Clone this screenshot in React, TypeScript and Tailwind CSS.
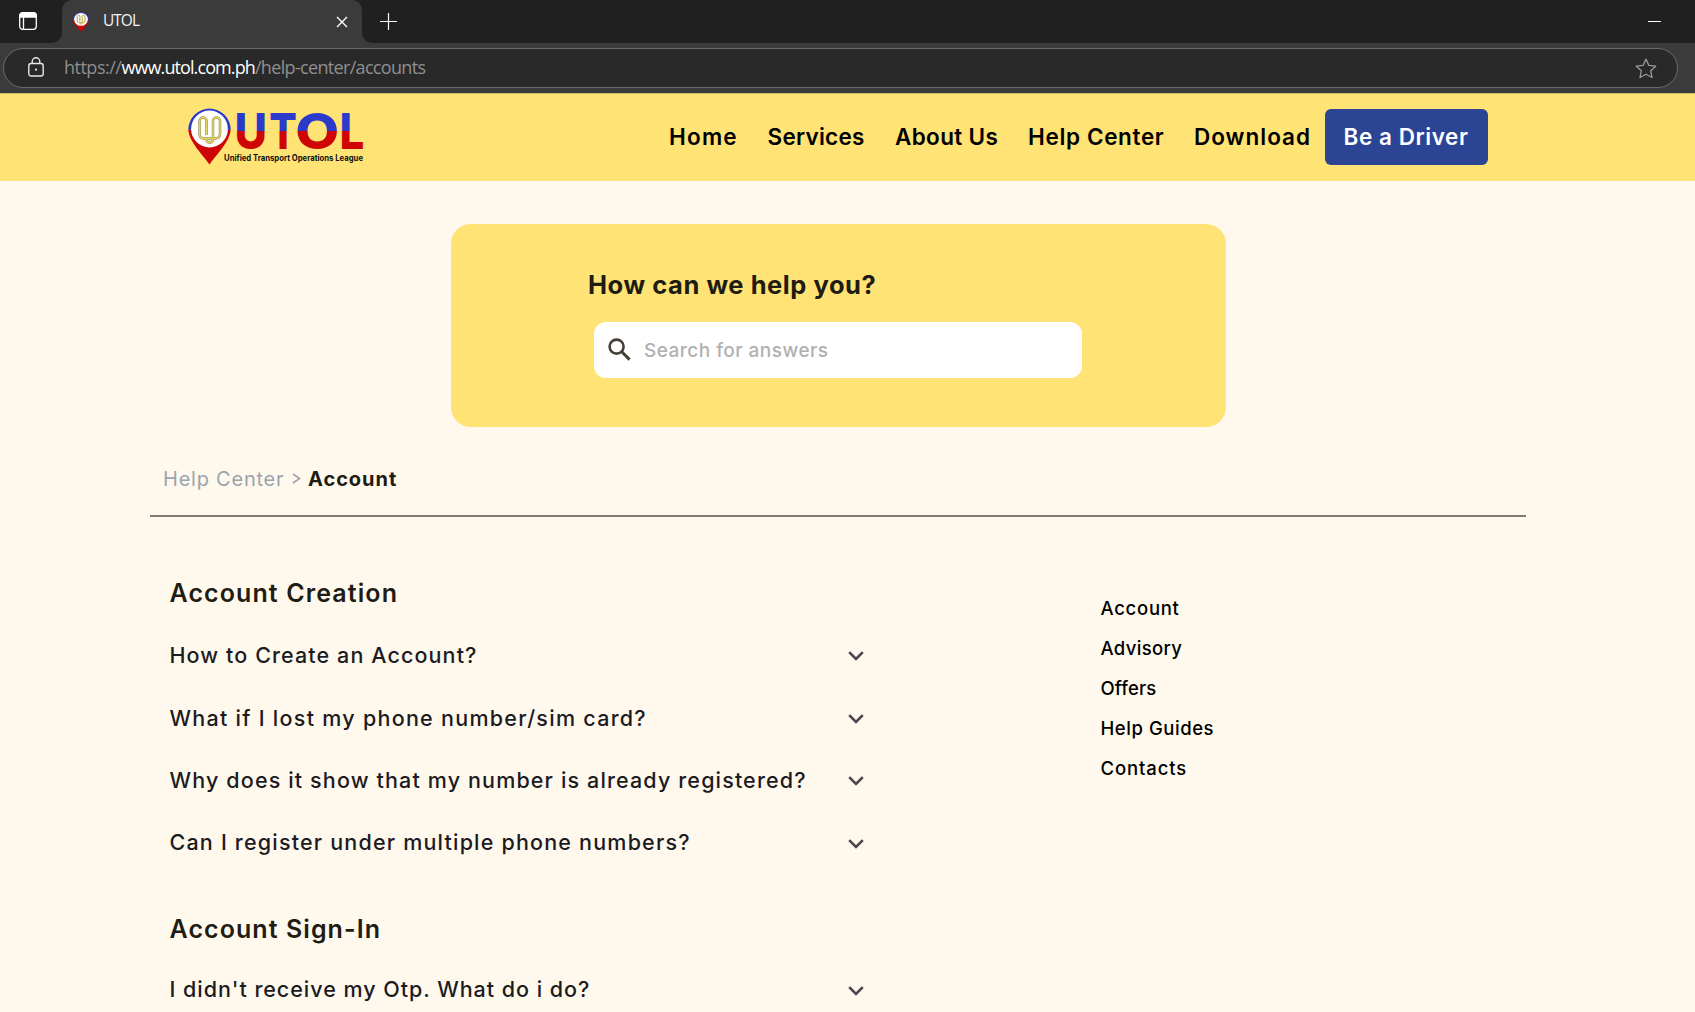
const nav = [
  { label: "Home", cls: "w-[98.5px] tracking-[1.2px]" },
  { label: "Services", cls: "w-[127.5px] tracking-[0.25px]" },
  { label: "About Us", cls: "w-[133px] tracking-[0.35px]" },
  { label: "Help Center", cls: "w-[166px] tracking-[0.65px]" },
  { label: "Download", cls: "w-[130.5px] tracking-[1px]" },
];

const creation = [
  { q: "How to Create an Account?", cls: "tracking-[1.1px]" },
  { q: "What if I lost my phone number/sim card?", cls: "tracking-[1.27px]" },
  { q: "Why does it show that my number is already registered?", cls: "tracking-[1.14px]" },
  { q: "Can I register under multiple phone numbers?", cls: "tracking-[1.19px]" },
];

const signIn = [{ q: "I didn't receive my Otp. What do i do?", cls: "tracking-[0.97px]" }];

const links = [
  { label: "Account", cls: "tracking-[0.72px]" },
  { label: "Advisory", cls: "tracking-[0.33px]" },
  { label: "Offers", cls: "tracking-[0.15px]" },
  { label: "Help Guides", cls: "tracking-[0.55px]" },
  { label: "Contacts", cls: "tracking-[0.9px]" },
];

const CLIP =
  "M18.5 27 V13 a3.5 3.5 0 0 0 -7 0 V25.5 Q11.5 30.5 16 30.5 H27.5 Q32 30.5 32 25.5 V13 a3.5 3.5 0 0 0 -7 0 V31 Q25 34.5 21.7 34.5 Q18.5 34.5 18.5 31";

function PinShape() {
  return (
    <>
      <path d="M21.5 56.5 C15 47 1 34 0.3 21.5 L42.7 21.5 C42 34 28 47 21.5 56.5Z" fill="#cf0404" />
      <path d="M0.3 21.8 A21.2 21.3 0 0 1 42.7 21.8Z" fill="#2b3acb" />
      <circle cx="21.5" cy="21" r="18.4" fill="#ffffff" />
      <path d={CLIP} fill="none" stroke="#8f8a55" strokeWidth="2.5" strokeLinejoin="round" />
      <path d={CLIP} fill="none" stroke="#e6d45c" strokeWidth="1.5" strokeLinejoin="round" />
    </>
  );
}

function Logo() {
  return (
    <svg width="178" height="60" viewBox="0 0 178 60" className="shrink-0 overflow-visible font-[Inter]">
      <defs>
        <linearGradient id="flag" gradientUnits="userSpaceOnUse" x1="0" y1="0" x2="0" y2="60">
          <stop offset="0.383" stopColor="#2b3acb" />
          <stop offset="0.383" stopColor="#cf0404" />
        </linearGradient>
      </defs>
      <PinShape />
      <g fill="url(#flag)" fontSize="50" fontWeight="800">
        <text x="46.5" y="41" textLength="32.5" lengthAdjust="spacingAndGlyphs">U</text>
        <text x="81.2" y="41" textLength="27.6" lengthAdjust="spacingAndGlyphs">T</text>
        <text x="107.2" y="41" textLength="44" lengthAdjust="spacingAndGlyphs">O</text>
        <text x="151.5" y="41" textLength="24.8" lengthAdjust="spacingAndGlyphs">L</text>
      </g>
      <text x="36" y="52.6" fontSize="8.5" fontWeight="700" textLength="139" lengthAdjust="spacingAndGlyphs" fill="#111111">
        Unified Transport Operations League
      </text>
    </svg>
  );
}

function BrowserChrome() {
  return (
    <div className="h-[93px] bg-[#3b3b3b] font-['Open_Sans',sans-serif]">
      <div className="flex h-[43px] bg-[#3b3b3b]">
        <div className="flex w-[62px] items-center rounded-br-[10px] bg-[#202020] pl-[19px]">
          <svg width="18" height="18" viewBox="0 0 18 18" fill="none" stroke="#fff" strokeWidth="1.3" className="-mt-px">
            <rect x="0.7" y="0.7" width="16.6" height="16.6" rx="3" />
            <path d="M1 3.5 Q1 1 3.5 1 H14.5 Q17 1 17 3.5 V5 H1Z" fill="#fff" />
            <path d="M4.5 5V17" />
          </svg>
        </div>
        <div className="flex w-[300px] bg-[#202020]">
          <div className="flex flex-1 items-center rounded-t-[10px] bg-[#3b3b3b] pr-[14px] pl-[11px]">
            <svg width="16" height="20" viewBox="0 0 43 57" preserveAspectRatio="none">
              <PinShape />
            </svg>
            <span className="-mt-0.5 ml-[14px] flex-1 text-[15.5px] leading-none tracking-[-1px] text-[#f2f2f2]">UTOL</span>
            <svg width="12" height="12" viewBox="0 0 12 12" stroke="#fff" strokeWidth="1.4" className="mt-px">
              <path d="M1 1L11 11M11 1L1 11" />
            </svg>
          </div>
        </div>
        <div className="flex flex-1 items-center justify-between rounded-bl-[10px] bg-[#202020] pr-[34px] pl-[18px]">
          <svg width="17" height="17" viewBox="0 0 17 17" stroke="#fff" strokeWidth="1.2" className="-mt-px">
            <path d="M8.5 0V17M0 8.5H17" />
          </svg>
          <div className="h-px w-[13px] bg-white" />
        </div>
      </div>
      <div className="mt-[5px] ml-[3px] flex h-10 w-[1675px] items-center rounded-full border border-[#6b6b6b] bg-[#292929] pr-5 pl-6">
        <svg width="16" height="20" viewBox="0 0 16 20" fill="none" stroke="#e8e8e8" strokeWidth="1.4" className="-mt-0.5">
          <rect x="0.8" y="6.5" width="14.4" height="12.5" rx="2.2" />
          <path d="M4.2 6.5V4.6a3.8 3.8 0 0 1 7.6 0V6.5" />
          <circle cx="8" cy="12.7" r="1.1" fill="#e8e8e8" stroke="none" />
        </svg>
        <div className="-mt-0.5 ml-5 flex flex-1 text-[18px] leading-none whitespace-nowrap text-[#8f8f8f]">
          <span className="tracking-[-0.5px]">https://</span>
          <span className="tracking-[-0.9px] text-white">www.utol.com.ph</span>
          <span className="tracking-[-0.67px]">/help-center/accounts</span>
        </div>
        <svg width="22" height="21" viewBox="0 0 22 21" fill="none" stroke="#9a9a9a" strokeWidth="1.3" strokeLinejoin="round">
          <path d="M11 1.2L13.9 7.4L20.7 8.2L15.7 12.8L17 19.5L11 16.2L5 19.5L6.3 12.8L1.3 8.2L8.1 7.4Z" />
        </svg>
      </div>
    </div>
  );
}

function Question({ q, cls }: { q: string; cls: string }) {
  return (
    <div className="flex h-[62.4px] w-[694px] items-center justify-between">
      <span className={`text-[21.5px] leading-none font-medium whitespace-nowrap text-[#1c1b1f] ${cls}`}>{q}</span>
      <svg width="16" height="10" viewBox="0 0 16 10" fill="none" stroke="#49454f" strokeWidth="2.6" className="mt-px">
        <path d="M1.2 1.2L8 8L14.8 1.2" />
      </svg>
    </div>
  );
}

export default function App() {
  return (
    <div className="h-[1012px] w-[1695px] overflow-hidden bg-[#fff9ed] font-[Inter,sans-serif]">
      <BrowserChrome />
      <header className="flex h-[88px] items-center border-t border-[#d3bd64] bg-[#ffe375] pb-0.5 pl-[188px]">
        <div className="mt-[3px]">
          <Logo />
        </div>
        <nav className="mt-[2px] ml-[303px] flex text-[22.5px] leading-none font-semibold text-black">
          {nav.map((n) => (
            <a key={n.label} className={`whitespace-nowrap ${n.cls}`}>{n.label}</a>
          ))}
        </nav>
        <button className="flex h-14 w-[163px] items-center justify-center rounded-md bg-[#2b4494] pt-0.5 text-[22.5px] leading-none font-semibold tracking-[0.55px] whitespace-nowrap text-white">
          Be a Driver
        </button>
      </header>

      <section className="mt-[43px] ml-[450.5px] h-[203px] w-[775px] rounded-[20px] bg-[#ffe375] pt-12">
        <h1 className="ml-[137.5px] text-[25.5px] leading-[26px] font-bold tracking-[0.55px] text-[#1e1c13]">How can we help you?</h1>
        <div className="mt-6 ml-[143.5px] flex h-[56px] w-[488px] items-center rounded-xl bg-white pl-[14px]">
          <svg width="23" height="23" viewBox="0 0 23 23" fill="none" stroke="#444038" strokeWidth="2.6" className="-mt-px">
            <circle cx="8.6" cy="8.6" r="7" />
            <path d="M13.5 13.5L21.6 21.6" strokeWidth="3" />
          </svg>
          <span className="ml-[13px] text-[19px] leading-none font-medium tracking-[0.47px] text-[#b0b0b0]">Search for answers</span>
        </div>
      </section>

      <div className="ml-[150px] flex h-[90px] w-[1376px] items-center border-b-2 border-[#7f7a74] pt-[15px] pl-[13px] text-[20px] leading-none whitespace-nowrap">
        <span className="w-[129px] tracking-[0.77px] text-[#9ca3af]">Help Center</span>
        <svg width="9" height="11" viewBox="0 0 9 11" fill="none" stroke="#9ca3af" strokeWidth="1.6" className="mr-[7px] -mt-px">
          <path d="M1 1L7.6 5.5L1 10" />
        </svg>
        <span className="font-bold tracking-[0.95px] text-[#1e1c13]">Account</span>
      </div>

      <main className="flex pl-[169.5px]">
        <div className="w-[931px] pt-[60px]">
          <h2 className="text-[25px] leading-[33px] font-semibold tracking-[1.1px] text-[#1e1c13]">Account Creation</h2>
          <div className="mt-[14.8px]">
            {creation.map((i) => (
              <Question key={i.q} {...i} />
            ))}
          </div>
          <h2 className="mt-[38.7px] text-[25px] leading-[33px] font-semibold tracking-[1.07px] text-[#1e1c13]">Account Sign-In</h2>
          <div className="mt-[13px]">
            {signIn.map((i) => (
              <Question key={i.q} {...i} />
            ))}
          </div>
        </div>
        <aside className="pt-[70.5px] text-[18.5px] leading-10 font-medium text-black">
          {links.map((l) => (
            <div key={l.label} className={`whitespace-nowrap ${l.cls}`}>{l.label}</div>
          ))}
        </aside>
      </main>
    </div>
  );
}
